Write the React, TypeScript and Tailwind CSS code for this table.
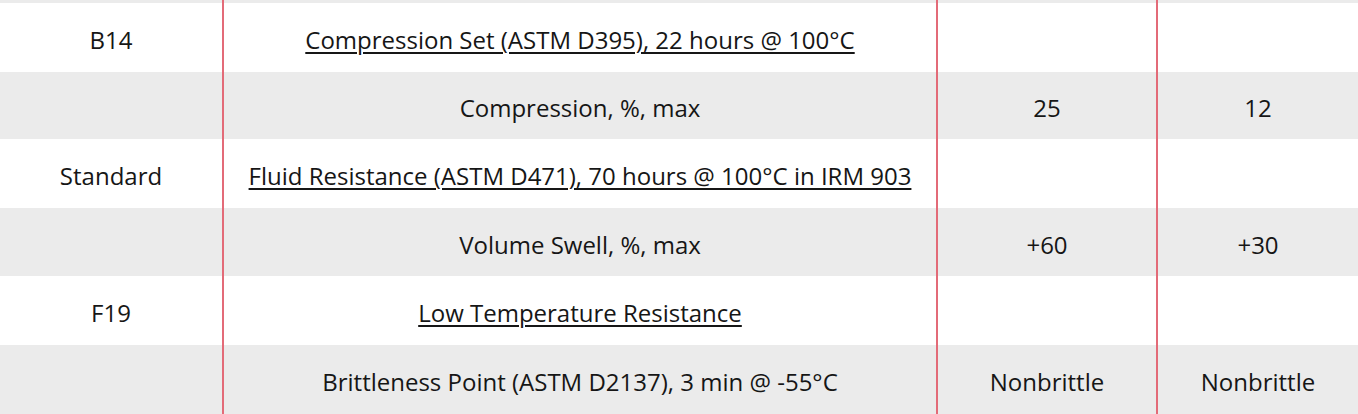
const rows = [
  { grade: "B14", label: "Compression Set (ASTM D395), 22 hours @ 100°C", heading: true, a: "", b: "", h: "h-[69px]" },
  { grade: "", label: "Compression, %, max", heading: false, a: "25", b: "12", h: "h-[67px]" },
  { grade: "Standard", label: "Fluid Resistance (ASTM D471), 70 hours @ 100°C in IRM 903", heading: true, a: "", b: "", h: "h-[69px]" },
  { grade: "", label: "Volume Swell, %, max", heading: false, a: "+60", b: "+30", h: "h-[68px]" },
  { grade: "F19", label: "Low Temperature Resistance", heading: true, a: "", b: "", h: "h-[69px]" },
  { grade: "", label: "Brittleness Point (ASTM D2137), 3 min @ -55°C", heading: false, a: "Nonbrittle", b: "Nonbrittle", h: "h-[69px]" },
];

export default function App() {
  return (
    <div className="w-[1358px] h-[414px] overflow-hidden bg-white font-['Open_Sans',sans-serif] text-[24px] text-[#161616]">
      <div className="grid grid-cols-[224px_714px_220px_1fr] h-[3px] bg-[#ebebeb]">
        <div className="border-r-2 border-[#e36b78]" />
        <div className="border-r-2 border-[#e36b78]" />
        <div className="border-r-2 border-[#e36b78]" />
        <div />
      </div>
      {rows.map((r, i) => (
        <div
          key={i}
          className={`grid grid-cols-[224px_714px_220px_1fr] ${r.h} ${i % 2 === 1 ? "bg-[#ebebeb]" : "bg-white"}`}
        >
          <div className="flex items-center justify-center pt-[5px] border-r-2 border-[#e36b78]">{r.grade}</div>
          <div className="flex items-center justify-center pt-[5px] border-r-2 border-[#e36b78]">
            <span className={r.heading ? "underline underline-offset-[3px] decoration-2" : ""}>{r.label}</span>
          </div>
          <div className="flex items-center justify-center pt-[5px] border-r-2 border-[#e36b78]">{r.a}</div>
          <div className="flex items-center justify-center pt-[5px]">{r.b}</div>
        </div>
      ))}
    </div>
  );
}
